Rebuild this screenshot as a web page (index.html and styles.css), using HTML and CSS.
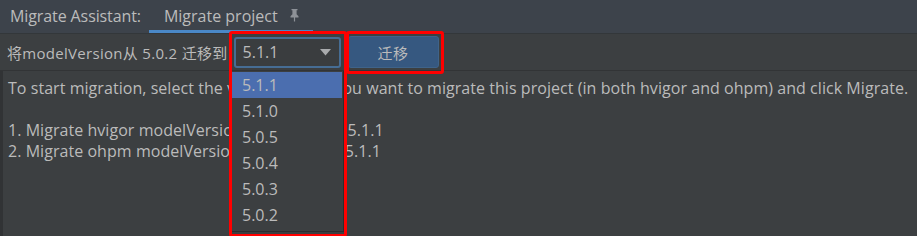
FILE: index.html
```html
<!DOCTYPE html>
<html>
<head>
<meta charset="utf-8">
<link rel="stylesheet" href="styles.css">
</head>
<body>
<div class="app">
  <div class="tabs">
    <span class="tabs-label">Migrate Assistant:</span>
    <div class="tab active">
      <span>Migrate project</span>
      <svg class="pin" width="9" height="14" viewBox="0 0 9 14">
        <path d="M1.5 1h6v1.2H6.6V6.3l1.9 2V9.5H5.1V13.5H3.9V9.5H.5V8.3l1.9-2V2.2h-.9z" fill="#8d9197"/>
      </svg>
    </div>
  </div>
  <div class="toolbar">
    <span class="label">将modelVersion从 5.0.2 迁移到</span>
    <div class="combo">
      <span>5.1.1</span>
      <svg class="caret" width="11" height="7" viewBox="0 0 11 7"><path d="M0 0h11L5.5 6.5z" fill="#a9abad"/></svg>
    </div>
    <button class="btn">迁移</button>
  </div>
  <div class="content">
    <p>To start migration, select the version which you want to migrate this project (in both hvigor and ohpm) and click Migrate.</p>
    <p class="blank">&nbsp;</p>
    <p>1. Migrate hvigor modelVersion from 5.0.2 to 5.1.1</p>
    <p>2. Migrate ohpm modelVersion from 5.0.2 to 5.1.1</p>
  </div>
  <ul class="popup">
    <li class="sel">5.1.1</li>
    <li>5.1.0</li>
    <li>5.0.5</li>
    <li>5.0.4</li>
    <li>5.0.3</li>
    <li>5.0.2</li>
  </ul>
  <div class="mark mark-combo"></div>
  <div class="mark mark-btn"></div>
</div>
</body>
</html>
```
FILE: styles.css
```css
* { box-sizing: border-box; }
html, body { margin: 0; padding: 0; }
body {
  background: #3c3f41;
  color: #bbbbbb;
  font-family: "Open Sans", "Noto Sans CJK SC", sans-serif;
  font-size: 16px;
  width: 917px;
  height: 236px;
  overflow: hidden;
}
.app { position: relative; width: 917px; height: 236px; }
.tabs {
  height: 34px;
  background: #3d434b;
  border-bottom: 1px solid #33373a;
  display: flex;
  align-items: stretch;
  padding-left: 10px;
  padding-top: 2px;
}
.tabs-label { display: flex; align-items: center; padding-bottom: 3px; white-space: nowrap; letter-spacing: -0.1px; }
.tab {
  margin-left: 8px;
  padding: 0 14px 0 15px;
  display: flex;
  align-items: center;
  gap: 12px;
  border-bottom: 3px solid #4a88c7;
  color: #bbbbbb;
  white-space: nowrap;
}
.pin { margin-top: -2px; flex-shrink: 0; }
.toolbar {
  height: 37px;
  display: flex;
  align-items: center;
  padding-left: 7px;
  border-bottom: 1px solid #323436;
}
.label { white-space: nowrap; font-size: 15px; letter-spacing: 0.3px; flex-shrink: 0; }
.combo {
  flex-shrink: 0;
  margin-left: 6px;
  width: 107px;
  height: 31px;
  border: 2px solid #466d94;
  border-radius: 3px;
  background: #3a3d3f;
  display: flex;
  align-items: center;
  justify-content: space-between;
  padding: 0 8px 0 7px;
}
.caret { margin-top: 1px; }
.btn {
  flex-shrink: 0;
  margin-left: 7px;
  width: 91px;
  height: 32px;
  padding: 0;
  background: #365880;
  border: 1px solid #3f6389;
  border-radius: 3px;
  color: #bbbbbb;
  font-family: inherit;
  font-size: 15px;
  letter-spacing: 0.5px;
}
.content {
  border-left: 3px solid #313335;
  height: 165px;
  padding: 7px 0 0 5px;
  letter-spacing: 0.05px;
}
.content p { margin: 0; line-height: 21px; white-space: nowrap; }
.popup {
  position: absolute;
  left: 232px;
  top: 71px;
  width: 112px;
  height: 161px;
  margin: 0;
  padding: 1px 1px 0 0;
  list-style: none;
  background: #3c3f41;
  border-right: 1px solid #2b2d2f;
  border-bottom: 1px solid #2b2d2f;
}
.popup li {
  height: 26px;
  line-height: 26px;
  padding-left: 10px;
}
.popup li.sel { background: #4b6eaf; }
.mark {
  position: absolute;
  border: 3px solid #ff0000;
  border-radius: 3px;
}
.mark-combo { left: 229px; top: 31px; width: 118px; height: 206px; }
.mark-btn { left: 346px; top: 31px; width: 98px; height: 43px; }
```
